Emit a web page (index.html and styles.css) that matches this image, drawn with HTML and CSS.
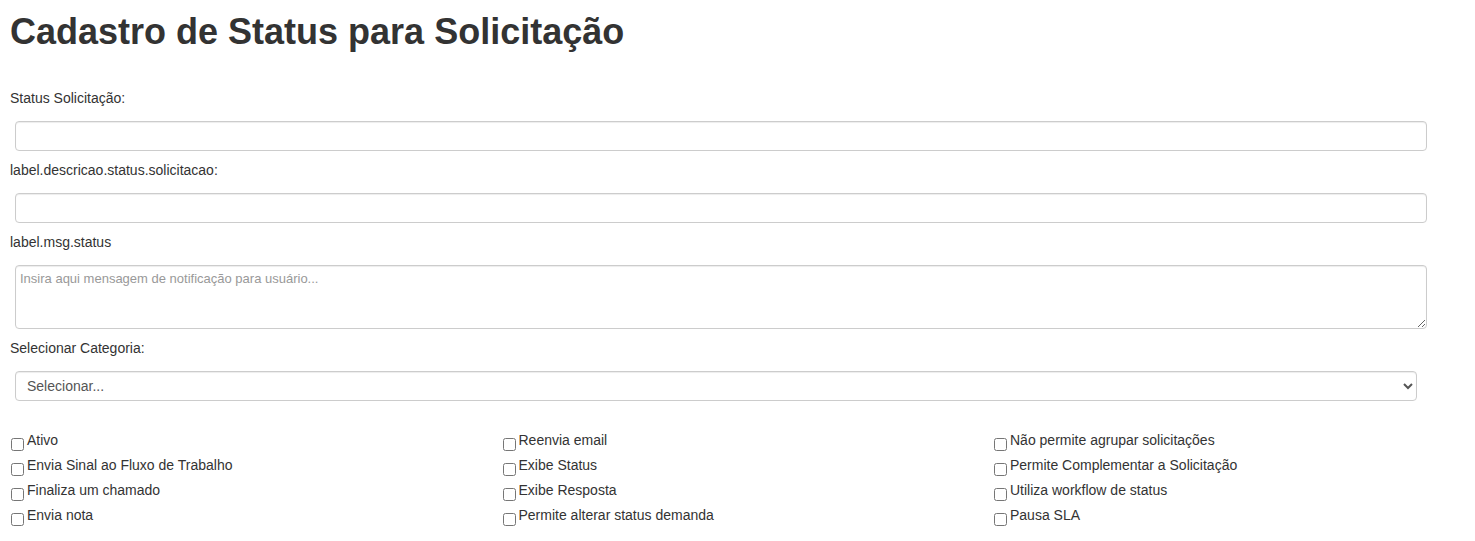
FILE: index.html
```html
<!DOCTYPE html>
<html lang="pt-BR">
<head>
  <meta charset="UTF-8">
  <title>Cadastro de Status para Solicitação</title>
  <link rel="stylesheet" href="styles.css">
</head>
<body>
  <main class="page">
    <h1>Cadastro de Status para Solicitação</h1>

    <form class="status-form">
      <div class="field">
        <label for="status">Status Solicitação:</label>
        <input type="text" id="status" class="control">
      </div>
      <div class="field">
        <label for="descricao">label.descricao.status.solicitacao:</label>
        <input type="text" id="descricao" class="control">
      </div>
      <div class="field">
        <label for="mensagem">label.msg.status</label>
        <textarea id="mensagem" class="control control-area" placeholder="Insira aqui mensagem de notificação para usuário..."></textarea>
      </div>
      <div class="field">
        <label for="categoria">Selecionar Categoria:</label>
        <select id="categoria" class="control control-select">
          <option>Selecionar...</option>
        </select>
      </div>

      <!-- Options -->
      <div class="options">
        <div class="option-col">
          <label class="check"><input type="checkbox">Ativo</label>
          <label class="check"><input type="checkbox">Envia Sinal ao Fluxo de Trabalho</label>
          <label class="check"><input type="checkbox">Finaliza um chamado</label>
          <label class="check"><input type="checkbox">Envia nota</label>
        </div>
        <div class="option-col">
          <label class="check"><input type="checkbox">Reenvia email</label>
          <label class="check"><input type="checkbox">Exibe Status</label>
          <label class="check"><input type="checkbox">Exibe Resposta</label>
          <label class="check"><input type="checkbox">Permite alterar status demanda</label>
        </div>
        <div class="option-col">
          <label class="check"><input type="checkbox">Não permite agrupar solicitações</label>
          <label class="check"><input type="checkbox">Permite Complementar a Solicitação</label>
          <label class="check"><input type="checkbox">Utiliza workflow de status</label>
          <label class="check"><input type="checkbox">Pausa SLA</label>
        </div>
      </div>
    </form>
  </main>
</body>
</html>
```

FILE: styles.css
```css
/* Base */
body {
  margin: 0;
  font-family: "Liberation Sans", Arial, sans-serif;
  font-size: 14px;
  color: #333333;
  background: #ffffff;
}
.page {
  padding: 0 10px;
}
h1 {
  margin: 12px 0 36px;
  font-size: 36px;
  font-weight: 700;
  line-height: 1.1;
  color: #333333;
}

/* Fields */
.field label {
  display: block;
  font-size: 14px;
  line-height: 20px;
  margin-bottom: 13px;
}
.field {
  margin-bottom: 9px;
}
.control {
  display: block;
  box-sizing: border-box;
  width: 1412px;
  height: 30px;
  margin: 0 0 0 5px;
  padding: 4px 10px;
  border: 1px solid #cccccc;
  border-radius: 4px;
  box-shadow: inset 0 1px 1px rgba(0, 0, 0, 0.075);
  font-family: "Liberation Sans", Arial, sans-serif;
  font-size: 14px;
  color: #555555;
  background: #ffffff;
}
.control-area {
  height: 64px;
  padding: 5px 4px;
  font-size: 13px;
}
.control-area::placeholder {
  color: #999999;
}
.control-select {
  width: 1402px;
  padding: 4px 7px;
}

/* Checkbox grid */
.options {
  display: grid;
  grid-template-columns: repeat(3, 491.5px);
  margin-top: 27px;
}
.check {
  display: flex;
  align-items: center;
  height: 25px;
  font-size: 14px;
}
.check input {
  margin: 8px 3px 0 1px;
}
```
